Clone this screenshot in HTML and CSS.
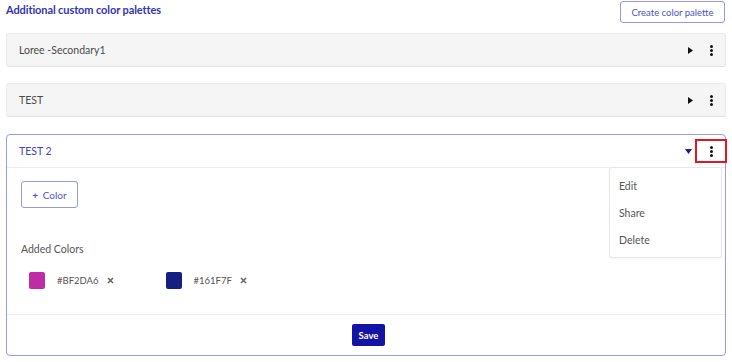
FILE: index.html
```html
<!DOCTYPE html>
<html lang="en">
<head>
<meta charset="utf-8">
<title>Custom color palettes</title>
<link rel="stylesheet" href="styles.css">
</head>
<body>
<div class="page">
  <div class="top">
    <h2 class="title">Additional custom color palettes</h2>
    <button class="btn-outline create">Create color palette</button>
  </div>
  <div class="list">
    <div class="row">
      <span class="row-name">Loree -Secondary1</span>
      <div class="actions">
        <svg class="tri" width="5" height="7" viewBox="0 0 5 7"><path d="M0 0 L5 3.5 L0 7 Z" fill="#111"/></svg>
        <span class="kebab"><i></i><i></i><i></i></span>
      </div>
    </div>
    <div class="row">
      <span class="row-name">TEST</span>
      <div class="actions">
        <svg class="tri" width="5" height="7" viewBox="0 0 5 7"><path d="M0 0 L5 3.5 L0 7 Z" fill="#111"/></svg>
        <span class="kebab"><i></i><i></i><i></i></span>
      </div>
    </div>
    <div class="card">
      <div class="card-head">
        <span class="card-name">TEST 2</span>
        <div class="actions">
          <svg class="caret" width="7" height="5" viewBox="0 0 7 5"><path d="M0 0 L7 0 L3.5 5 Z" fill="#1c1ca8"/></svg>
          <span class="kebab active"><i></i><i></i><i></i></span>
        </div>
      </div>
      <div class="card-body">
        <button class="btn-outline add"><span class="plus">+</span> Color</button>
        <div class="label">Added Colors</div>
        <div class="colors">
          <div class="color">
            <span class="swatch" style="background:#BF2DA6"></span>
            <span class="hex">#BF2DA6</span>
            <svg class="x" width="7" height="7" viewBox="0 0 7 7"><path d="M1 1 L6 6 M6 1 L1 6" stroke="#666" stroke-width="1.6"/></svg>
          </div>
          <div class="color">
            <span class="swatch" style="background:#161F7F"></span>
            <span class="hex">#161F7F</span>
            <svg class="x" width="7" height="7" viewBox="0 0 7 7"><path d="M1 1 L6 6 M6 1 L1 6" stroke="#666" stroke-width="1.6"/></svg>
          </div>
        </div>
      </div>
      <div class="card-foot">
        <button class="save">Save</button>
      </div>
      <ul class="menu">
        <li>Edit</li>
        <li>Share</li>
        <li>Delete</li>
      </ul>
    </div>
  </div>
</div>
</body>
</html>
```

FILE: styles.css
```css
* { box-sizing: border-box; }
html, body { margin: 0; padding: 0; background: #fff; }
body { font-family: Lato, "Noto Sans", sans-serif; color: #555; }

.page { padding: 1px 6px 0 6px; }

.top {
  display: flex;
  justify-content: space-between;
  align-items: flex-start;
  height: 22px;
}
.title {
  margin: 2px 0 0 0;
  font-size: 11px;
  font-weight: 700;
  color: #3434b2;
  letter-spacing: -0.1px;
}
.btn-outline {
  font-family: inherit;
  background: #fff;
  border: 1px solid #9797e2;
  border-radius: 3px;
  color: #5252c2;
  cursor: pointer;
}
.create {
  width: 105px;
  height: 22px;
  font-size: 9.5px;
  padding: 0;
  margin-right: 1px;
}

.list {
  margin-top: 10px;
  display: flex;
  flex-direction: column;
  gap: 16px;
}
.row {
  height: 34px;
  background: #f5f5f5;
  border: 1px solid #ebebeb;
  border-bottom-color: #e2e2e2;
  border-radius: 3px;
  display: flex;
  align-items: center;
  justify-content: space-between;
  padding-left: 12px;
}
.row-name { font-size: 10.5px; color: #4a4a4a; }

.actions { display: flex; align-items: center; gap: 2px; margin-right: -2px; }
.tri, .caret { display: block; }
.kebab {
  width: 32px;
  height: 24px;
  border: 2px solid transparent;
  display: flex;
  flex-direction: column;
  align-items: center;
  justify-content: center;
  gap: 1px;
}
.kebab i {
  display: block;
  width: 3px;
  height: 3px;
  border-radius: 50%;
  background: #111;
}
.kebab.active { border-color: #e3161f; }

.card {
  position: relative;
  margin-top: 1px;
  border: 1px solid #9a9ae6;
  border-radius: 4px;
  background: #fff;
}
.card-head {
  height: 33px;
  display: flex;
  align-items: center;
  justify-content: space-between;
  padding-left: 12px;
  border-bottom: 1px solid #efefef;
}
.card-name { font-size: 10.5px; color: #4343c0; }
.card-head .actions { gap: 3px; }

.card-body { padding: 13px 14px 25px 14px; }
.add {
  display: block;
  width: 57px;
  height: 27px;
  font-size: 10px;
  padding: 0;
}
.plus { font-weight: 700; margin-right: 2px; }
.label {
  margin-top: 34px;
  font-size: 10.5px;
  line-height: 14px;
  color: #555;
}
.colors {
  margin-top: 16px;
  display: flex;
  gap: 52px;
  padding-left: 8px;
}
.color { display: flex; align-items: center; }
.swatch {
  width: 16px;
  height: 17px;
  border-radius: 2px;
  display: block;
}
.hex { font-size: 9.5px; color: #555; margin-left: 12px; margin-right: 8px; }
.x { display: block; }

.card-foot {
  border-top: 1px solid #ececec;
  padding: 9px 0 9px 5px;
  display: flex;
  justify-content: center;
}
.save {
  font-family: inherit;
  width: 33px;
  height: 22px;
  padding: 0;
  background: #1313a4;
  color: #fff;
  border: none;
  border-radius: 2px;
  font-size: 9.5px;
  font-weight: 700;
}

.menu {
  position: absolute;
  top: 32px;
  right: 3px;
  width: 113px;
  height: 91px;
  margin: 0;
  padding: 11px 0 0 9px;
  list-style: none;
  background: #fff;
  border: 1px solid #e6e6e6;
  border-radius: 3px;
  box-shadow: 0 1px 2px rgba(0,0,0,0.05);
}
.menu li {
  font-size: 10.5px;
  line-height: 14px;
  color: #555;
  margin-bottom: 13px;
}
```
